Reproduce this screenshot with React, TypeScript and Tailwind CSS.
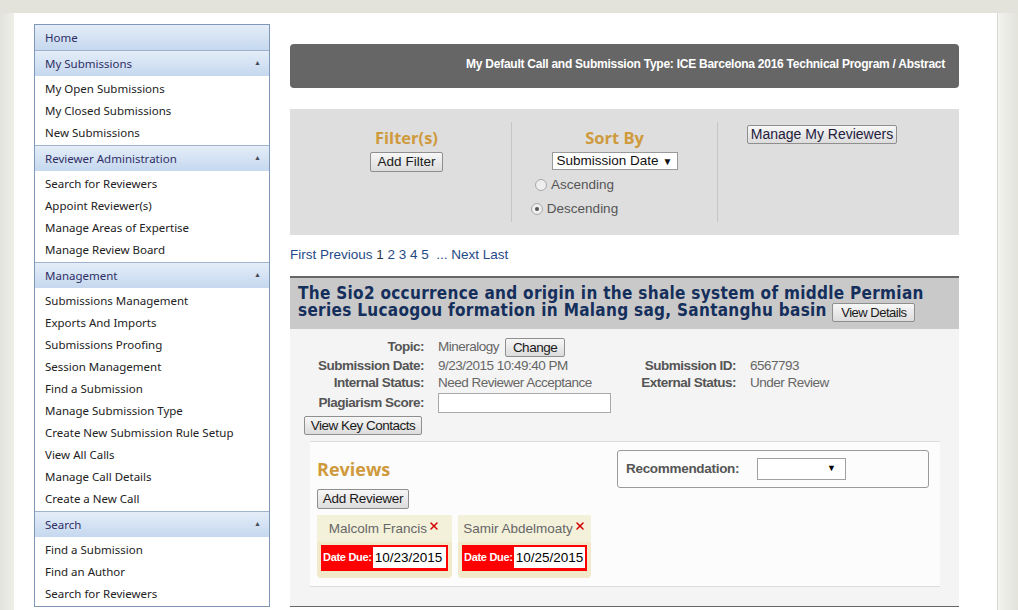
import { X } from 'lucide-react';

const sections = [
  { title: 'My Submissions', items: ['My Open Submissions', 'My Closed Submissions', 'New Submissions'] },
  { title: 'Reviewer Administration', items: ['Search for Reviewers', 'Appoint Reviewer(s)', 'Manage Areas of Expertise', 'Manage Review Board'] },
  {
    title: 'Management',
    items: [
      'Submissions Management',
      'Exports And Imports',
      'Submissions Proofing',
      'Session Management',
      'Find a Submission',
      'Manage Submission Type',
      'Create New Submission Rule Setup',
      'View All Calls',
      'Manage Call Details',
      'Create a New Call',
    ],
  },
  { title: 'Search', items: ['Find a Submission', 'Find an Author', 'Search for Reviewers'] },
];

const reviewers = [
  { name: 'Malcolm Francis', due: '10/23/2015', w: 'w-[135px]' },
  { name: 'Samir Abdelmoaty', due: '10/25/2015', w: 'w-[133px]' },
];

const arial = "font-['Liberation_Sans',Arial,sans-serif]";
const narrow = "font-['Liberation_Sans',Arial,sans-serif] tracking-[-0.5px]";
const btn =
  'border border-[#8f8f8f] rounded-[2px] bg-gradient-to-b from-[#f7f7f7] to-[#dcdcdc] text-[#1a1a1a] leading-none whitespace-nowrap';

function MenuHeader({ title, first, arrow }: { title: string; first?: boolean; arrow?: boolean }) {
  return (
    <div
      className={`flex items-center justify-between px-[10px] bg-gradient-to-b from-[#e4edf8] to-[#c5d8ef] text-[#2f2f66] ${
        first ? 'h-[25px]' : 'h-[26px] border-t border-[#9fb3cf]'
      }`}
    >
      <span>{title}</span>
      {arrow && <span className="text-[7px] text-[#4a4a5a] mr-[-2px]">▲</span>}
    </div>
  );
}

function Sidebar() {
  return (
    <div className="w-[236px] shrink-0 border border-[#7f98b8] bg-white text-[11.5px] font-['Noto_Sans',sans-serif] self-start">
      <MenuHeader title="Home" first />
      {sections.map((s) => (
        <div key={s.title}>
          <MenuHeader title={s.title} arrow />
          <div className="pt-[2px] pb-[1px]">
            {s.items.map((it) => (
              <div key={it} className="h-[22px] leading-[22px] pl-[10px] text-[#222]">
                {it}
              </div>
            ))}
          </div>
        </div>
      ))}
    </div>
  );
}

function Radio({ label, checked }: { label: string; checked?: boolean }) {
  return (
    <div className="flex items-center gap-[4px] h-[24px]">
      <span className="w-[12px] h-[12px] rounded-full border border-[#a8a8a8] bg-[#eeeeee] flex items-center justify-center">
        {checked && <span className="w-[4px] h-[4px] rounded-full bg-[#555]" />}
      </span>
      <span className="text-[13.5px] text-[#555]">{label}</span>
    </div>
  );
}

function FilterPanel() {
  return (
    <div className={`mt-[21px] h-[126px] bg-[#dedede] flex ${arial}`}>
      <div className="w-[221px] pl-[12px] pt-[19px] flex flex-col items-center">
        <div className="text-[16.5px] font-bold text-[#cf9a3c] leading-[20px] font-['Open_Sans',sans-serif]">Filter(s)</div>
        <button className={`${btn} mt-[4px] h-[20px] px-[7px] text-[13.5px]`}>Add Filter</button>
      </div>
      <div className="w-px bg-[#c6c6c6] my-[13px]" />
      <div className="w-[205px] pt-[19px] flex flex-col items-center">
        <div className="text-[16.5px] font-bold text-[#cf9a3c] leading-[20px] font-['Open_Sans',sans-serif]">Sort By</div>
        <div className="mt-[4px] h-[18px] w-[126px] border border-[#9a9a9a] bg-white flex items-center justify-between px-[4px] text-[13.5px] text-[#111]">
          <span>Submission Date</span>
          <span className="text-[10px]">▼</span>
        </div>
        <div className="pr-[80px] mt-[3px] flex flex-col items-center">
          <Radio label="Ascending" />
          <Radio label="Descending" checked />
        </div>
      </div>
      <div className="w-px bg-[#c6c6c6] my-[13px]" />
      <div className="flex-1 pl-[29px] pt-[13px]">
        <button className={`${btn} h-[19px] w-[150px] text-[14px] text-[#23203c]`}>Manage My Reviewers</button>
      </div>
    </div>
  );
}

function ReviewerCard({ name, due, w }: { name: string; due: string; w: string }) {
  return (
    <div className={`${w} h-[63px] rounded-b-[4px] bg-[#f2e9ca] flex flex-col`}>
      <div className="h-[27px] bg-[#f4f1db] flex items-start justify-center pt-[5px]">
        <span className="text-[13.5px] text-[#666] leading-[18px] whitespace-nowrap">{name}</span>
        <X className="w-[12px] h-[12px] text-[#d40000] ml-[1px]" strokeWidth={3} />
      </div>
      <div className="mx-[4px] mt-[3px] h-[26px] bg-[#ff0000] flex items-center pl-[2px] gap-[1px] whitespace-nowrap">
        <span className="text-white text-[11px] font-bold tracking-[-0.3px]">Date Due:</span>
        <div className="h-[21px] flex-1 mr-[2px] bg-white text-[13.5px] text-black leading-[21px] px-[2px]">{due}</div>
      </div>
    </div>
  );
}

function SubmissionCard() {
  return (
    <div className={`mt-[13px] border-t-2 border-b border-[#666] ${arial}`}>
      <div className="h-[51px] bg-[#c9c9c9] pl-[8px] pt-[7px] font-['DejaVu_Sans_Condensed','DejaVu_Sans',sans-serif] font-bold text-[17px] tracking-[0.3px] leading-[17px] text-[#152f5c] whitespace-nowrap">
        The Sio2 occurrence and origin in the shale system of middle Permian
        <br />
        series Lucaogou formation in Malang sag, Santanghu basin{' '}
        <button className={`${btn} h-[19px] w-[83px] text-[13px] align-[-1px] font-normal ${narrow}`}>View Details</button>
      </div>
      <div className={`bg-[#f4f4f4] pt-[8px] pb-[19px] text-[13.5px] whitespace-nowrap ${narrow}`}>
        <div className="pl-[14px]">
          <div className="flex items-center h-[21px]">
            <div className="w-[120px] text-right font-bold text-[#555]">Topic:</div>
            <div className="ml-[14px] text-[#666] flex items-center">
              Mineralogy
              <button className={`${btn} ml-[6px] h-[19px] w-[60px] text-[13.5px] ${narrow}`}>Change</button>
            </div>
          </div>
          <div className="flex items-center h-[17px]">
            <div className="w-[120px] text-right font-bold text-[#555]">Submission Date:</div>
            <div className="ml-[14px] w-[200px] text-[#666]">9/23/2015 10:49:40 PM</div>
            <div className="w-[98px] text-right font-bold text-[#555]">Submission ID:</div>
            <div className="ml-[14px] text-[#666]">6567793</div>
          </div>
          <div className="flex items-center h-[16px]">
            <div className="w-[120px] text-right font-bold text-[#555]">Internal Status:</div>
            <div className="ml-[14px] w-[200px] text-[#666]">Need Reviewer Acceptance</div>
            <div className="w-[98px] text-right font-bold text-[#555]">External Status:</div>
            <div className="ml-[14px] text-[#666]">Under Review</div>
          </div>
          <div className="flex items-center h-[24px]">
            <div className="w-[120px] text-right font-bold text-[#555]">Plagiarism Score:</div>
            <div className="ml-[14px] w-[173px] h-[20px] border border-[#a9a9a9] bg-white" />
          </div>
          <button className={`${btn} mt-[1px] h-[19px] w-[118px] text-[13.5px] ${narrow}`}>View Key Contacts</button>
        </div>
        <div className={`mx-[20px] mr-[19px] mt-[5px] h-[146px] border-y border-[#dddddd] bg-[#fcfcfc] flex tracking-normal ${arial}`}>
          <div className="w-[300px] pl-[7px] pt-[17px]">
            <div className="text-[18px] font-bold text-[#cf9a3c] leading-[20px] font-['Open_Sans',sans-serif]">Reviews</div>
            <button className={`${btn} mt-[10px] h-[20px] w-[92px] text-[13.5px] tracking-[-0.3px]`}>Add Reviewer</button>
            <div className="mt-[5px] flex gap-[6px]">
              {reviewers.map((r) => (
                <ReviewerCard key={r.name} {...r} />
              ))}
            </div>
          </div>
          <div className="ml-[7px] mt-[8px] w-[312px] h-[38px] border border-[#9a9a9a] rounded-[3px] flex items-center pl-[8px]">
            <span className="w-[131px] text-[13.5px] font-bold text-[#555] tracking-[-0.3px]">Recommendation:</span>
            <div className="w-[89px] h-[22px] border border-[#a0a0a0] bg-white flex items-center justify-end pr-[9px] text-[9px]">▼</div>
          </div>
        </div>
      </div>
    </div>
  );
}

export default function App() {
  return (
    <div className="h-[610px] w-[1018px] overflow-hidden bg-[#e3e3dc] pt-[13px] flex">
      <div className="w-[14px] shrink-0 bg-gradient-to-r from-[#e3e3dc] to-[#efefea]" />
      <div className="w-[984px] shrink-0 bg-white flex pl-[20px] pt-[11px] border-r border-[#d8d8d8]">
        <Sidebar />
        <div className="ml-[20px] w-[669px] pt-[20px]">
          <div className={`h-[44px] rounded-[4px] bg-[#666] flex items-center justify-end pr-[14px] pb-[4px] text-white text-[12px] font-bold ${arial} tracking-[-0.25px]`}>
            My Default Call and Submission Type: ICE Barcelona 2016 Technical Program / Abstract
          </div>
          <FilterPanel />
          <div className={`mt-[12px] text-[13.5px] text-[#1f4a86] leading-[16px] ${arial}`}>
            First Previous <span className="text-[#333]">1</span> 2 3 4 5 &nbsp;... Next Last
          </div>
          <SubmissionCard />
        </div>
      </div>
      <div className="flex-1 bg-gradient-to-r from-[#f2f2ee] to-[#e3e3dc]" />
    </div>
  );
}
